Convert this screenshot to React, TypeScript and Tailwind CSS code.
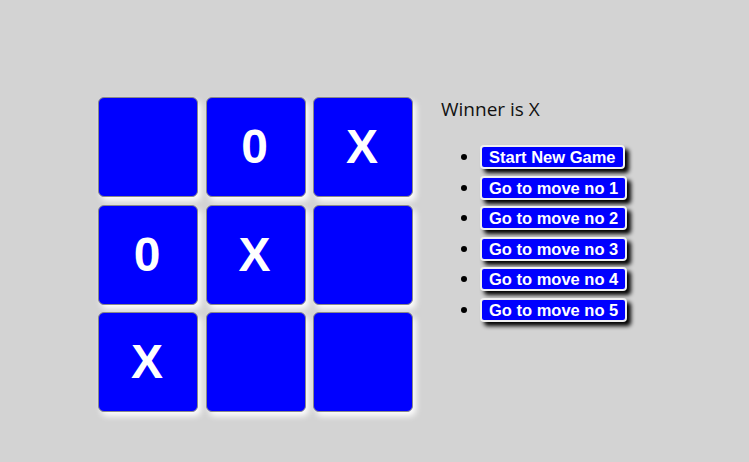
import { useState } from "react";

type Cell = "X" | "0" | null;

const board: Cell[] = [null, "0", "X", "0", "X", null, "X", null, null];
const moves = ["Start New Game", "Go to move no 1", "Go to move no 2", "Go to move no 3", "Go to move no 4", "Go to move no 5"];

const App = () => {
  const [squares] = useState<Cell[]>(board);

  return (
    <div className="min-h-[462px] w-full bg-[#d3d3d3] pl-[98px] pt-[97px] font-['Liberation_Sans',Arial,sans-serif]">
      <div className="flex items-start">
        {/* Board */}
        <div className="grid grid-cols-[100px_100px_100px] gap-[7.5px]">
          {squares.map((sq, i) => (
            <button
              key={i}
              className="h-[100px] w-[100px] rounded-[6px] border border-[#8a8a8a] bg-[#0000ff] pr-[2px] text-[48px] font-bold leading-none text-white shadow-[3px_4px_6px_white]"
            >
              {sq}
            </button>
          ))}
        </div>

        {/* Game info */}
        <div className="ml-[28px]">
          <div className="font-['Open_Sans',sans-serif] text-[19px] leading-[24px] text-[#111]">Winner is X</div>
          <ul className="mt-[23px] list-disc pl-[39px] text-[21px] leading-[24px]">
            {moves.map((m) => (
              <li key={m} className="mb-[6.6px] h-[24px] marker:text-black">
                <button className="h-[24px] rounded-[4px] border-2 border-[#f0f0f0] bg-[#0000ff] px-[7px] align-baseline text-[16.5px] font-bold leading-[18px] text-white shadow-[4px_4px_4px_black]">
                  {m}
                </button>
              </li>
            ))}
          </ul>
        </div>
      </div>
    </div>
  );
};

export default App;
